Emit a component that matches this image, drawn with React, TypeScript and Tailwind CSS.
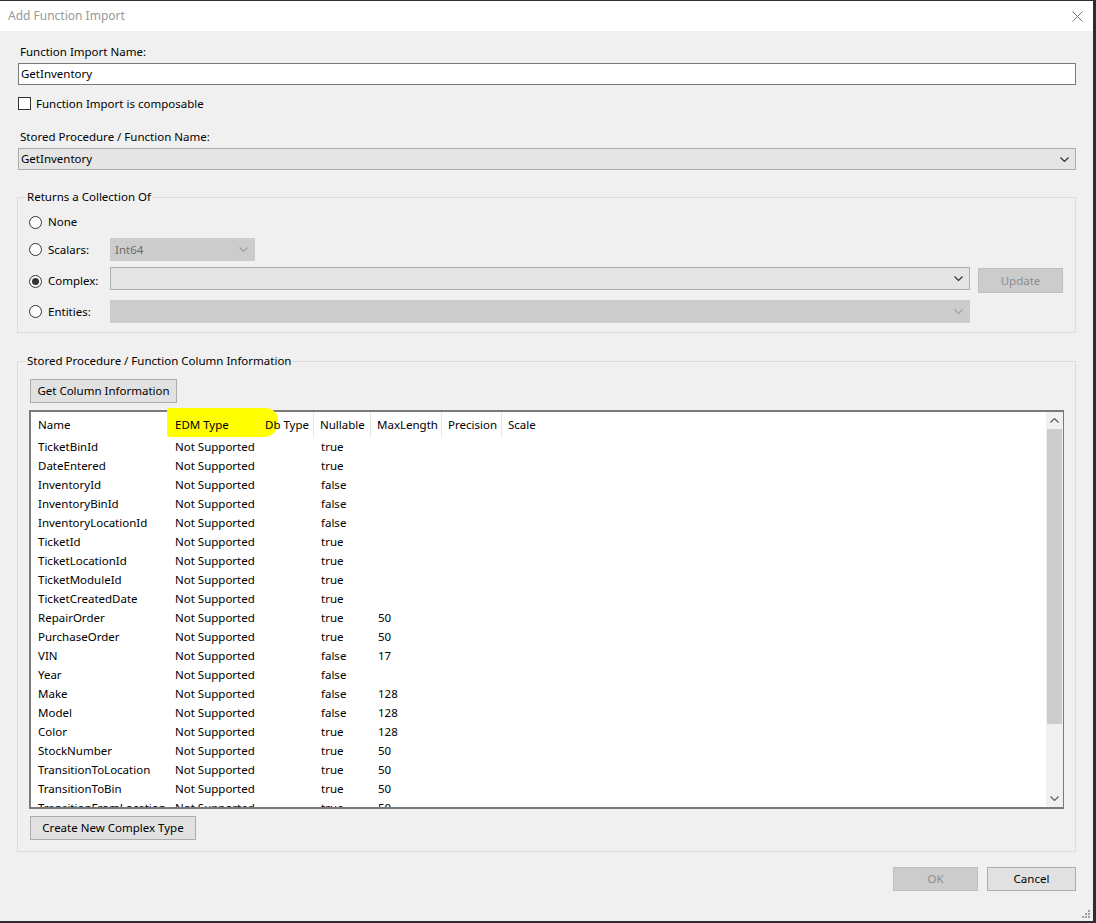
import React from 'react';

type Row = { name: string; nullable: string; max?: string };

const ROWS: Row[] = [
  { name: 'TicketBinId', nullable: 'true' },
  { name: 'DateEntered', nullable: 'true' },
  { name: 'InventoryId', nullable: 'false' },
  { name: 'InventoryBinId', nullable: 'false' },
  { name: 'InventoryLocationId', nullable: 'false' },
  { name: 'TicketId', nullable: 'true' },
  { name: 'TicketLocationId', nullable: 'true' },
  { name: 'TicketModuleId', nullable: 'true' },
  { name: 'TicketCreatedDate', nullable: 'true' },
  { name: 'RepairOrder', nullable: 'true', max: '50' },
  { name: 'PurchaseOrder', nullable: 'true', max: '50' },
  { name: 'VIN', nullable: 'false', max: '17' },
  { name: 'Year', nullable: 'false' },
  { name: 'Make', nullable: 'false', max: '128' },
  { name: 'Model', nullable: 'false', max: '128' },
  { name: 'Color', nullable: 'true', max: '128' },
  { name: 'StockNumber', nullable: 'true', max: '50' },
  { name: 'TransitionToLocation', nullable: 'true', max: '50' },
  { name: 'TransitionToBin', nullable: 'true', max: '50' },
  { name: 'TransitionFromLocation', nullable: 'true', max: '50' },
];

function Chevron({ className = '', up = false }: { className?: string; up?: boolean }) {
  return (
    <svg width="9" height="5" viewBox="0 0 9 5" className={className}>
      <path
        d={up ? 'M0.5 4.5 L4.5 0.5 L8.5 4.5' : 'M0.5 0.5 L4.5 4.5 L8.5 0.5'}
        fill="none"
        stroke="currentColor"
        strokeWidth="1.2"
      />
    </svg>
  );
}

function Radio({ checked = false }: { checked?: boolean }) {
  return (
    <span className="w-[13px] h-[13px] rounded-full border border-[#333] bg-white flex items-center justify-center shrink-0">
      {checked && <span className="w-[7px] h-[7px] rounded-full bg-[#333]" />}
    </span>
  );
}

function Combo({ value, disabled, className }: { value?: string; disabled?: boolean; className: string }) {
  return (
    <div
      className={`h-[23px] flex items-center justify-between pl-[4px] pr-[6px] border ${
        disabled ? 'bg-[#cccccc] border-[#cccccc] text-[#6d6d6d]' : 'bg-[#e5e5e5] border-[#adadad] text-black'
      } ${className}`}
    >
      <span>{value}</span>
      <Chevron className={disabled ? 'text-[#a0a0a0]' : 'text-[#333]'} />
    </div>
  );
}

function Button({ children, disabled, className }: { children: React.ReactNode; disabled?: boolean; className: string }) {
  return (
    <div
      className={`h-[24px] flex items-center justify-center border ${
        disabled ? 'bg-[#cccccc] border-[#bfbfbf] text-[#8c8c8c]' : 'bg-[#e1e1e1] border-[#adadad] text-black'
      } ${className}`}
    >
      {children}
    </div>
  );
}

function GroupBox({ title, className, children }: { title: string; className: string; children: React.ReactNode }) {
  return (
    <div className={`relative border border-[#dcdcdc] ${className}`}>
      <span className="absolute -top-[9px] left-[8px] px-[1px] bg-[#f0f0f0] leading-[16px]">{title}</span>
      {children}
    </div>
  );
}

export default function App() {
  return (
    <div className="w-[1096px] h-[923px] bg-[#2b2d30] pt-[1px] font-['Noto_Sans',sans-serif] text-[11.5px] leading-[16px] text-black">
      <div className="w-[1093px] h-[920px] bg-[#f0f0f0] flex flex-col relative">
        {/* title bar */}
        <div className="h-[30px] bg-white flex items-center justify-between pl-[8px] pr-[10px] shrink-0">
          <span className="text-[#999999] text-[12px]">Add Function Import</span>
          <svg width="11" height="11" viewBox="0 0 11 11" className="text-[#777]">
            <path d="M0.5 0.5 L10.5 10.5 M10.5 0.5 L0.5 10.5" stroke="currentColor" strokeWidth="1" />
          </svg>
        </div>

        <div className="flex-1 pl-[17px] pr-[17px] pt-[13px] flex flex-col">
          <div className="ml-[3px]">Function Import Name:</div>
          <div className="mt-[3px] ml-[1px] h-[22px] bg-white border border-[#7a7a7a] flex items-center pl-[2px]">
            GetInventory
          </div>
          <div className="mt-[11px] ml-[1px] flex items-center gap-[5px] h-[14px]">
            <span className="w-[13px] h-[13px] border border-[#333] bg-white shrink-0" />
            <span className="pt-[1px]">Function Import is composable</span>
          </div>

          <div className="mt-[19px] ml-[3px]">Stored Procedure / Function Name:</div>
          <div className="mt-[3px] ml-[1px] h-[22px] bg-[#e5e5e5] border border-[#adadad] flex items-center justify-between pl-[2px] pr-[6px]">
            <span>GetInventory</span>
            <Chevron className="text-[#333]" />
          </div>

          <GroupBox title="Returns a Collection Of" className="mt-[27px] pl-[11px] pr-[12px] pt-[14px] pb-[9px]">
            <div className="h-[20px] flex items-center gap-[6px]">
              <Radio />
              <span>None</span>
            </div>
            <div className="mt-[6px] h-[23px] flex items-center">
              <div className="w-[81px] flex items-center gap-[6px]">
                <Radio />
                <span>Scalars:</span>
              </div>
              <Combo value="Int64" disabled className="w-[145px]" />
            </div>
            <div className="mt-[6px] h-[23px] flex items-start">
              <div className="w-[81px] h-[23px] pt-[5px] flex items-center gap-[6px]">
                <Radio checked />
                <span>Complex:</span>
              </div>
              <Combo className="w-[860px]" />
              <Button disabled className="ml-[8px] mt-[1px] w-[85px] h-[25px]">
                Update
              </Button>
            </div>
            <div className="mt-[10px] h-[23px] flex items-center">
              <div className="w-[81px] flex items-center gap-[6px]">
                <Radio />
                <span>Entities:</span>
              </div>
              <Combo disabled className="w-[860px]" />
            </div>
          </GroupBox>

          <GroupBox
            title="Stored Procedure / Function Column Information"
            className="mt-[28px] pl-[12px] pr-[11px] pt-[17px] pb-[11px]"
          >
            <Button className="w-[147px]">Get Column Information</Button>

            <div className="relative mt-[7px] -ml-[1px] h-[399px] bg-white border-2 border-[#7a7a7a] border-r-[1px] isolate">
              {/* highlighter mark */}
              <div className="absolute z-0 left-[136px] -top-[4px] w-[111px] h-[29px] bg-[#ffff00] rounded-l-[3px] rounded-r-[12px] rounded-br-[14px]" />
              <div className="relative z-10 h-full flex overflow-hidden">
                <div className="flex-1">
                  <div className="h-[25px] flex items-stretch">
                    <div className="w-[137px] pl-[7px] flex items-center">Name</div>
                    <div className="w-[90px] pl-[7px] flex items-center border-r border-[#e5e5e5]">EDM Type</div>
                    <div className="w-[56px] pl-[7px] flex items-center border-r border-[#e5e5e5]">Db Type</div>
                    <div className="w-[57px] pl-[6px] flex items-center border-r border-[#e5e5e5]">Nullable</div>
                    <div className="w-[71px] pl-[6px] flex items-center border-r border-[#e5e5e5]">MaxLength</div>
                    <div className="w-[60px] pl-[6px] flex items-center border-r border-[#e5e5e5]">Precision</div>
                    <div className="w-[40px] pl-[6px] flex items-center">Scale</div>
                  </div>
                  {ROWS.map((r) => (
                    <div key={r.name} className="h-[19px] flex items-center whitespace-nowrap">
                      <div className="w-[137px] pl-[7px]">{r.name}</div>
                      <div className="w-[146px] pl-[7px]">Not Supported</div>
                      <div className="w-[57px] pl-[7px]">{r.nullable}</div>
                      <div className="w-[71px] pl-[7px]">{r.max}</div>
                    </div>
                  ))}
                </div>
                {/* scrollbar */}
                <div className="w-[17px] h-full bg-[#f0f0f0] flex flex-col items-center">
                  <div className="h-[17px] flex items-center justify-center text-[#606060]">
                    <Chevron up />
                  </div>
                  <div className="w-[15px] h-[295px] bg-[#cdcdcd]" />
                  <div className="flex-1" />
                  <div className="h-[17px] flex items-center justify-center text-[#606060]">
                    <Chevron />
                  </div>
                </div>
              </div>
            </div>

            <Button className="mt-[7px] w-[166px]">Create New Complex Type</Button>
          </GroupBox>

          <div className="mt-[15px] flex justify-end gap-[9px]">
            <Button disabled className="w-[85px]">
              OK
            </Button>
            <Button className="w-[89px]">Cancel</Button>
          </div>
        </div>

        {/* size grip */}
        <svg width="8" height="8" viewBox="0 0 8 8" className="absolute right-[3px] bottom-[3px] text-[#a0a0a0]">
          <rect x="6" y="0" width="2" height="2" fill="currentColor" />
          <rect x="3" y="3" width="2" height="2" fill="currentColor" />
          <rect x="6" y="3" width="2" height="2" fill="currentColor" />
          <rect x="0" y="6" width="2" height="2" fill="currentColor" />
          <rect x="3" y="6" width="2" height="2" fill="currentColor" />
          <rect x="6" y="6" width="2" height="2" fill="currentColor" />
        </svg>
      </div>
    </div>
  );
}
